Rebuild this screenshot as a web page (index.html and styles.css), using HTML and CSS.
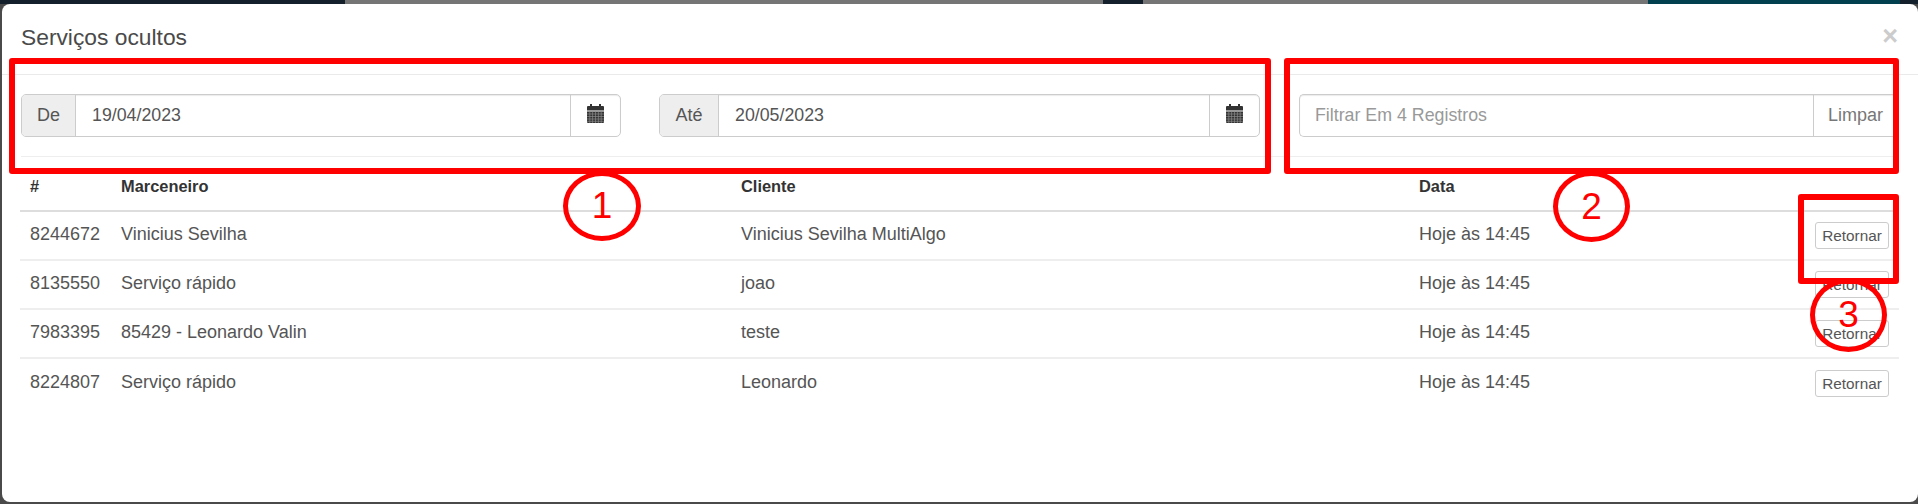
FILE: index.html
```html
<!DOCTYPE html>
<html lang="pt">
<head>
<meta charset="utf-8">
<title>Serviços ocultos</title>
<link rel="stylesheet" href="styles.css">
</head>
<body>
<svg class="defs" width="0" height="0" aria-hidden="true">
  <symbol id="calendar" viewBox="0 0 17 19">
    <path class="cal-fill" d="M3 0h2v2h7V0h2v2h2a1 1 0 0 1 1 1v3.500H0V3a1 1 0 0 1 1-1h2z"/>
    <path class="cal-fill" d="M0 7.500h17V18a1 1 0 0 1-1 1H1a1 1 0 0 1-1-1z"/>
    <path class="cal-grid" d="M0 10h17M0 12.500h17M0 15h17M0 17.300h17M2.800 7.500V19M5.600 7.500V19M8.500 7.500V19M11.400 7.500V19M14.200 7.500V19"/>
  </symbol>
</svg>
<div class="backdrop">
  <div class="seg seg-navy"></div>
  <div class="seg seg-grey"></div>
  <div class="seg seg-navy2"></div>
  <div class="seg seg-grey2"></div>
  <div class="seg seg-teal"></div>
  <div class="seg seg-end"></div>
</div>
<div class="modal">
  <header class="modal-header">
    <h4 class="modal-title">Serviços ocultos</h4>
    <span class="close">×</span>
  </header>
  <div class="filters">
    <div class="input-group date-de">
      <span class="addon addon-de">De</span>
      <span class="field">19/04/2023</span>
      <span class="icon-btn"><svg class="cal"><use href="#calendar"/></svg></span>
    </div>
    <div class="input-group date-ate">
      <span class="addon addon-ate">Até</span>
      <span class="field">20/05/2023</span>
      <span class="icon-btn"><svg class="cal"><use href="#calendar"/></svg></span>
    </div>
    <div class="input-group search">
      <span class="field placeholder">Filtrar Em 4 Registros</span>
      <span class="limpar">Limpar</span>
    </div>
  </div>
  <table class="grid">
    <thead>
      <tr><th class="c-id">#</th><th class="c-marc">Marceneiro</th><th class="c-cli">Cliente</th><th class="c-data">Data</th><th class="c-act"></th></tr>
    </thead>
    <tbody>
      <tr><td>8244672</td><td>Vinicius Sevilha</td><td>Vinicius Sevilha MultiAlgo</td><td>Hoje às 14:45</td><td class="c-act"><span class="btn">Retornar</span></td></tr>
      <tr><td>8135550</td><td>Serviço rápido</td><td>joao</td><td>Hoje às 14:45</td><td class="c-act"><span class="btn">Retornar</span></td></tr>
      <tr><td>7983395</td><td>85429 - Leonardo Valin</td><td>teste</td><td>Hoje às 14:45</td><td class="c-act"><span class="btn">Retornar</span></td></tr>
      <tr><td>8224807</td><td>Serviço rápido</td><td>Leonardo</td><td>Hoje às 14:45</td><td class="c-act"><span class="btn">Retornar</span></td></tr>
    </tbody>
  </table>
</div>
<div class="mark box-1"></div>
<div class="mark box-2"></div>
<div class="mark box-3"></div>
<div class="mark ring ring-1">1</div>
<div class="mark ring ring-2">2</div>
<div class="mark ring ring-3">3</div>
</body>
</html>
```
FILE: styles.css
```css
* { box-sizing: border-box; }
html, body { margin: 0; height: 100%; }
body {
  position: relative;
  width: 1918px;
  height: 504px;
  overflow: hidden;
  background: #4a4a4a;
  font-family: "Liberation Sans", Arial, sans-serif;
  font-size: 18px;
  color: #555;
}
.defs { position: absolute; }
.backdrop { display: flex; height: 4px; }
.seg-navy { width: 345px; background: #14212c; }
.seg-grey { width: 758px; background: #757575; }
.seg-navy2 { width: 40px; background: #14212c; }
.seg-grey2 { width: 505px; background: #757575; }
.seg-teal { width: 252px; background: #03404f; }
.seg-end { flex: 1; background: #14212c; }
.modal {
  margin-left: 2px;
  height: 498px;
  background: #fff;
  border-radius: 8px;
  display: flex;
  flex-direction: column;
}
.modal-header {
  height: 71px;
  flex: none;
  padding: 19px 20px 0 19px;
  border-bottom: 1px solid #eaeaea;
  display: flex;
  justify-content: space-between;
}
.modal-title {
  margin: 0;
  font-size: 22.800px;
  font-weight: 400;
  line-height: 29px;
  color: #4a4a4a;
}
.close {
  font-size: 27px;
  font-weight: 700;
  line-height: 26px;
  color: #ccc;
}
.filters {
  flex: none;
  height: 82px;
  margin: 0 19px;
  padding-top: 19px;
  border-bottom: 1px solid #eee;
  display: flex;
}
.input-group {
  display: flex;
  height: 43px;
  border: 1px solid #ccc;
  border-radius: 5px;
  background: #fff;
  box-shadow: inset 0 1px 1px rgba(0,0,0,.08);
}
.date-de { width: 600px; margin-right: 38px; }
.date-ate { width: 601px; margin-right: 39px; }
.search { flex: 1; border-right: 0; border-radius: 5px 0 0 5px; }
.addon {
  display: flex;
  align-items: center;
  justify-content: center;
  flex: none;
  height: 100%;
  padding-bottom: 1px;
  background: #eee;
  border-right: 1px solid #ccc;
  border-radius: 4px 0 0 4px;
}
.addon-de { width: 54px; }
.addon-ate { width: 59px; }
.field {
  flex: 1;
  display: flex;
  align-items: center;
  padding: 0 0 1px 16px;
  font-size: 17.800px;
}
.placeholder { color: #999; padding-left: 15px; }
.icon-btn {
  flex: none;
  width: 50px;
  display: flex;
  align-items: center;
  justify-content: center;
  border-left: 1px solid #ccc;
}
.cal { width: 17px; height: 19px; margin-bottom: 4px; }
.cal-fill { fill: #333; }
.cal-grid { fill: none; stroke: #8a8a8a; stroke-width: .7; }
.limpar {
  flex: none;
  width: 86px;
  display: flex;
  align-items: center;
  padding: 0 0 1px 14px;
  border-left: 1px solid #ccc;
  color: #777;
}
.grid {
  width: 1879px;
  margin-left: 18px;
  border-collapse: collapse;
  table-layout: fixed;
}
.grid th {
  height: 54px;
  padding: 5px 10px 0;
  text-align: left;
  font-size: 16.400px;
  font-weight: 700;
  color: #333;
  border-bottom: 2px solid #ddd;
}
.grid td {
  height: 49px;
  padding: 0 10px 2px;
  border-bottom: 2px solid #eee;
  font-size: 18px;
}
.grid tbody tr:last-child td { border-bottom: 0; }
.c-id { width: 91px; }
.c-marc { width: 620px; }
.c-cli { width: 678px; }
.c-data { width: 300px; }
.grid .c-act { text-align: right; padding-bottom: 0; }
.btn {
  display: inline-block;
  width: 74px;
  height: 27px;
  line-height: 25px;
  text-align: center;
  font-size: 15.300px;
  border: 1px solid #ccc;
  border-radius: 3px;
  background: #fff;
  vertical-align: middle;
}
.mark { position: absolute; }
.box-1, .box-2, .box-3 { border: 6px solid #f00; border-radius: 3px; }
.box-1 { left: 9px; top: 58px; width: 1262px; height: 116px; }
.box-2 { left: 1284px; top: 58px; width: 615px; height: 116px; }
.box-3 { left: 1798px; top: 194px; width: 101px; height: 90px; }
.ring {
  display: flex;
  align-items: center;
  justify-content: center;
  border: 5px solid #f00;
  border-radius: 50%;
  color: #f00;
  font-size: 37px;
}
.ring-1 { left: 563px; top: 171px; width: 78px; height: 70px; }
.ring-2 { left: 1553px; top: 171px; width: 77px; height: 71px; }
.ring-3 { left: 1810px; top: 278px; width: 77px; height: 74px; }
```
